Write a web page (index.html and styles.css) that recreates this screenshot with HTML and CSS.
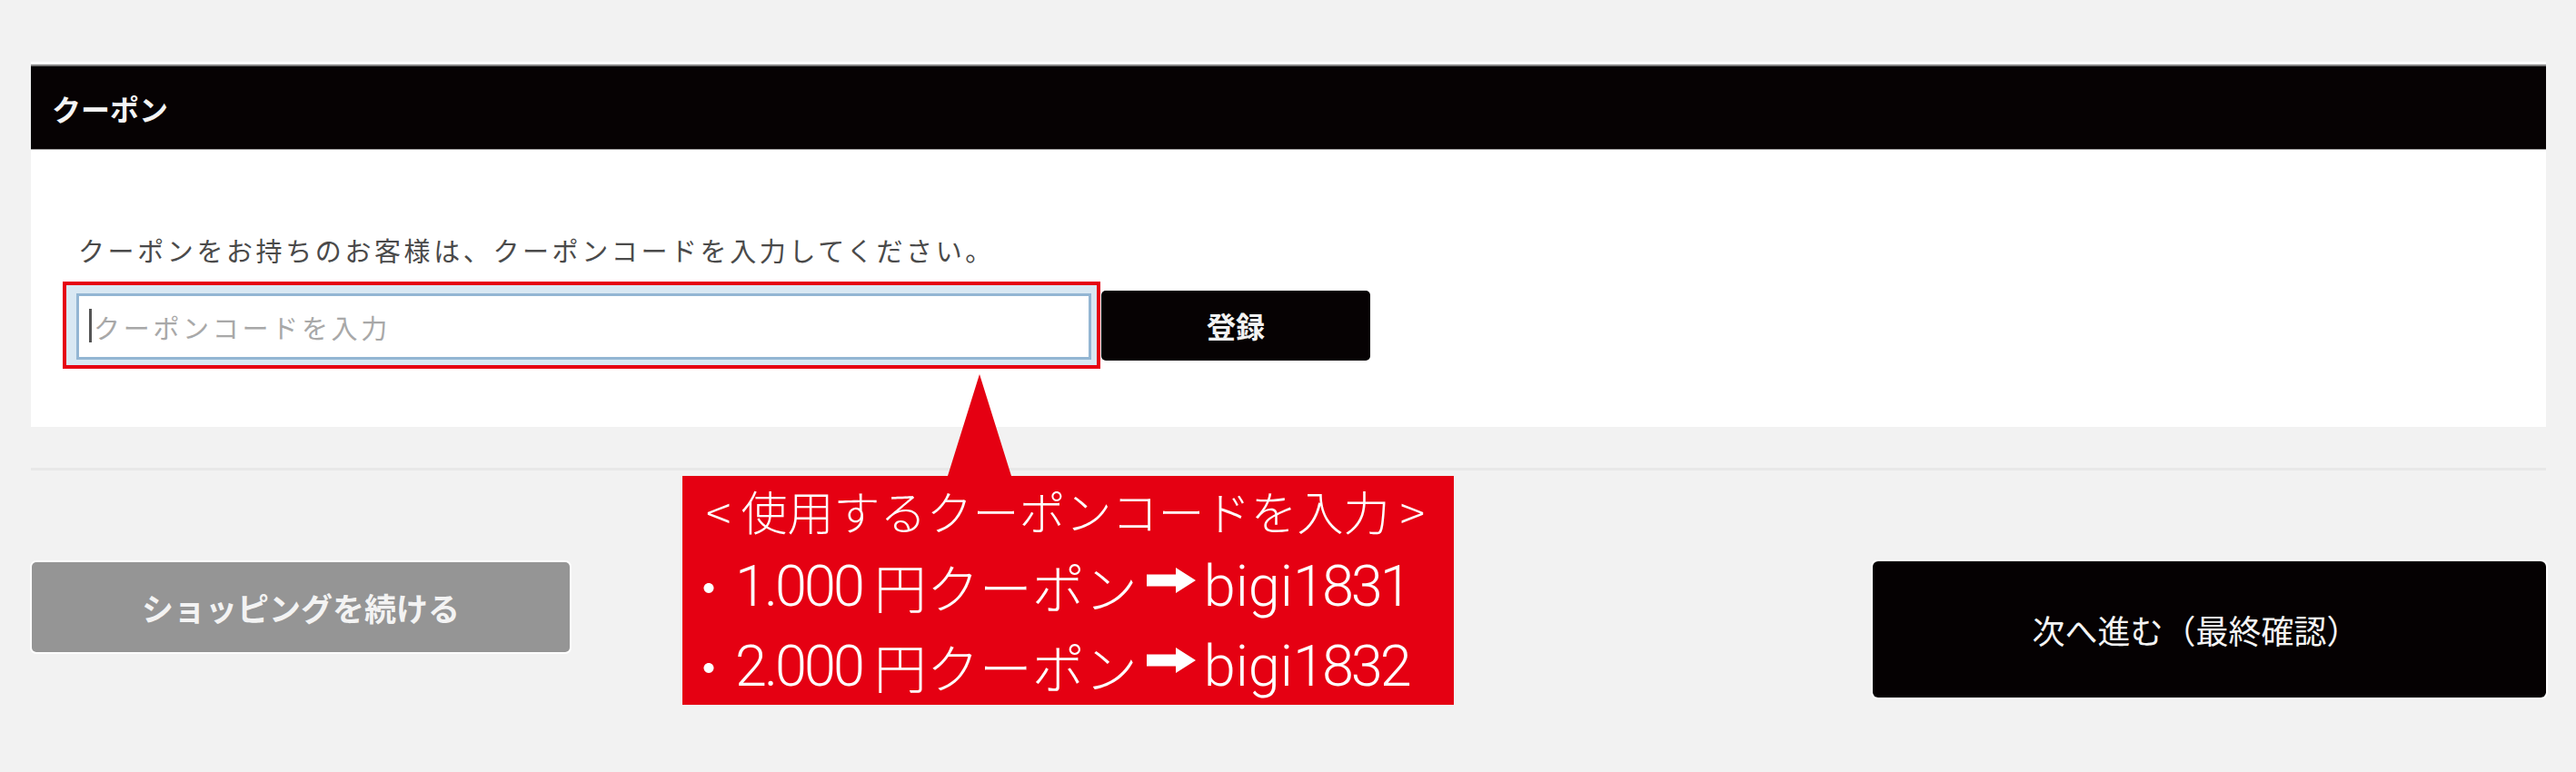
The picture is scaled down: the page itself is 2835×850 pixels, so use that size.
FILE: index.html
```html
<!DOCTYPE html>
<html lang="ja">
<head>
<meta charset="utf-8">
<title>クーポン</title>
<link rel="stylesheet" href="styles.css">
</head>
<body>
<div class="page">
  <section class="card">
    <div class="card-head">クーポン</div>
    <div class="card-body">
      <p class="desc">クーポンをお持ちのお客様は、クーポンコードを入力してください。</p>
      <div class="coupon-row">
        <div class="field-frame">
          <div class="field">
            <span class="caret"></span>
            <input class="field-input" type="text" placeholder="クーポンコードを入力">
          </div>
        </div>
        <button class="btn-register" type="button">登録</button>
      </div>
    </div>
  </section>
  <hr class="divider">
  <div class="actions">
    <button class="btn-continue" type="button">ショッピングを続ける</button>
    <button class="btn-next" type="button">次へ進む（最終確認）</button>
  </div>
  <div class="callout">
    <div class="callout-title">&lt; 使用するクーポンコードを入力 &gt;</div>
    <div class="callout-item">・<span class="latin num">1.000</span> 円クーポン<svg class="arrow" viewBox="0 0 54 28" width="54" height="28"><path d="M0 7.5H32V0L54 14L32 28V20.5H0Z" fill="#fff"/></svg><span class="latin">bigi<span class="num">1831</span></span></div>
    <div class="callout-item last">・<span class="latin num">2.000</span> 円クーポン<svg class="arrow" viewBox="0 0 54 28" width="54" height="28"><path d="M0 7.5H32V0L54 14L32 28V20.5H0Z" fill="#fff"/></svg><span class="latin">bigi<span class="num">1832</span></span></div>
  </div>
</div>
</body>
</html>
```
FILE: styles.css
```css
html, body {
  margin: 0;
  padding: 0;
}
body {
  background: #f2f2f2;
  font-family: "Noto Sans CJK JP", "Noto Sans", sans-serif;
}
.page {
  position: relative;
  width: 2835px;
  height: 850px;
  box-sizing: border-box;
  padding: 71px 33px 0 34px;
  overflow: hidden;
}
.card-head {
  height: 94px;
  box-sizing: border-box;
  border-top: 2px solid #7e7e7e;
  border-bottom: 1px solid #9a9a9a;
  background: #060203;
  color: #f4f4f4;
  font-size: 32px;
  font-weight: 700;
  display: flex;
  align-items: center;
  padding-left: 23px;
  box-shadow: 0 -3px 0 #fff;
}
.card-body {
  height: 305px;
  box-sizing: border-box;
  background: #fff;
  padding: 92px 0 0 35px;
}
.desc {
  margin: 0 0 17px 17px;
  font-size: 29px;
  line-height: 36px;
  letter-spacing: 3.6px;
  color: #4a4a4a;
}
.coupon-row {
  display: flex;
  align-items: center;
}
.field-frame {
  width: 1142px;
  height: 96px;
  box-sizing: border-box;
  border: 4px solid #e60012;
  background: #d9e8f3;
  padding: 9px 6px 6px 11px;
}
.field {
  position: relative;
  height: 100%;
  box-sizing: border-box;
  border: 3px solid #93b6d3;
  background: #fff;
}
.caret {
  position: absolute;
  left: 11px;
  top: 14px;
  width: 3px;
  height: 37px;
  background: #555;
}
.field-input {
  display: block;
  width: 100%;
  height: 100%;
  box-sizing: border-box;
  border: 0;
  outline: none;
  background: transparent;
  padding: 0 0 0 16px;
  font-family: "Noto Sans CJK JP", sans-serif;
  font-size: 29px;
  letter-spacing: 3.7px;
}
.field-input::placeholder {
  color: #a8a8a8;
}
.btn-register {
  width: 296px;
  height: 77px;
  margin-left: 1px;
  border: 0;
  border-radius: 5px;
  background: #060203;
  color: #f2f2f2;
  font-family: "Noto Sans CJK JP", sans-serif;
  font-size: 32px;
  font-weight: 700;
  padding: 0;
}
.divider {
  margin: 45px 0 0;
  height: 3px;
  border: 0;
  background: #e8e8e8;
}
.actions {
  margin-top: 100px;
  display: flex;
  justify-content: space-between;
  align-items: flex-start;
}
.btn-continue {
  width: 592px;
  height: 99px;
  margin: 1px 0 0 1px;
  border: 0;
  border-radius: 5px;
  background: #959595;
  color: #f3f3f3;
  font-family: "Noto Sans CJK JP", sans-serif;
  font-size: 35px;
  font-weight: 700;
  padding: 0;
  box-shadow: 0 0 0 2px #fff;
}
.btn-next {
  width: 741px;
  height: 150px;
  border: 0;
  border-radius: 6px;
  background: #050102;
  color: #f4f4f4;
  font-family: "Noto Sans CJK JP", sans-serif;
  font-size: 36px;
  padding: 0 30px 0 0;
  box-shadow: 0 0 0 2px #fff;
}
.callout {
  position: absolute;
  left: 751px;
  top: 524px;
  width: 849px;
  height: 252px;
  background: #e50012;
  color: #fff;
  font-family: "Noto Sans CJK JP", sans-serif;
  font-weight: 300;
  white-space: nowrap;
}
.callout::before {
  content: "";
  position: absolute;
  left: 292px;
  top: -112px;
  border-left: 35px solid transparent;
  border-right: 35px solid transparent;
  border-bottom: 112px solid #e50012;
}
.callout-title {
  height: 76px;
  font-size: 51px;
  line-height: 76px;
  padding-left: 26px;
}
.callout-item {
  height: 90px;
  font-size: 58px;
  line-height: 90px;
}
.callout-item.last {
  height: 86px;
  line-height: 86px;
}
.latin {
  font-family: Roboto, "Liberation Sans", sans-serif;
  font-weight: 300;
  font-size: 63px;
  line-height: 1;
  vertical-align: 3px;
}
.latin .num {
  vertical-align: 0;
}
.num {
  letter-spacing: -3px;
}
.arrow {
  vertical-align: 17px;
  margin: 0 9px 0 10px;
}
```
